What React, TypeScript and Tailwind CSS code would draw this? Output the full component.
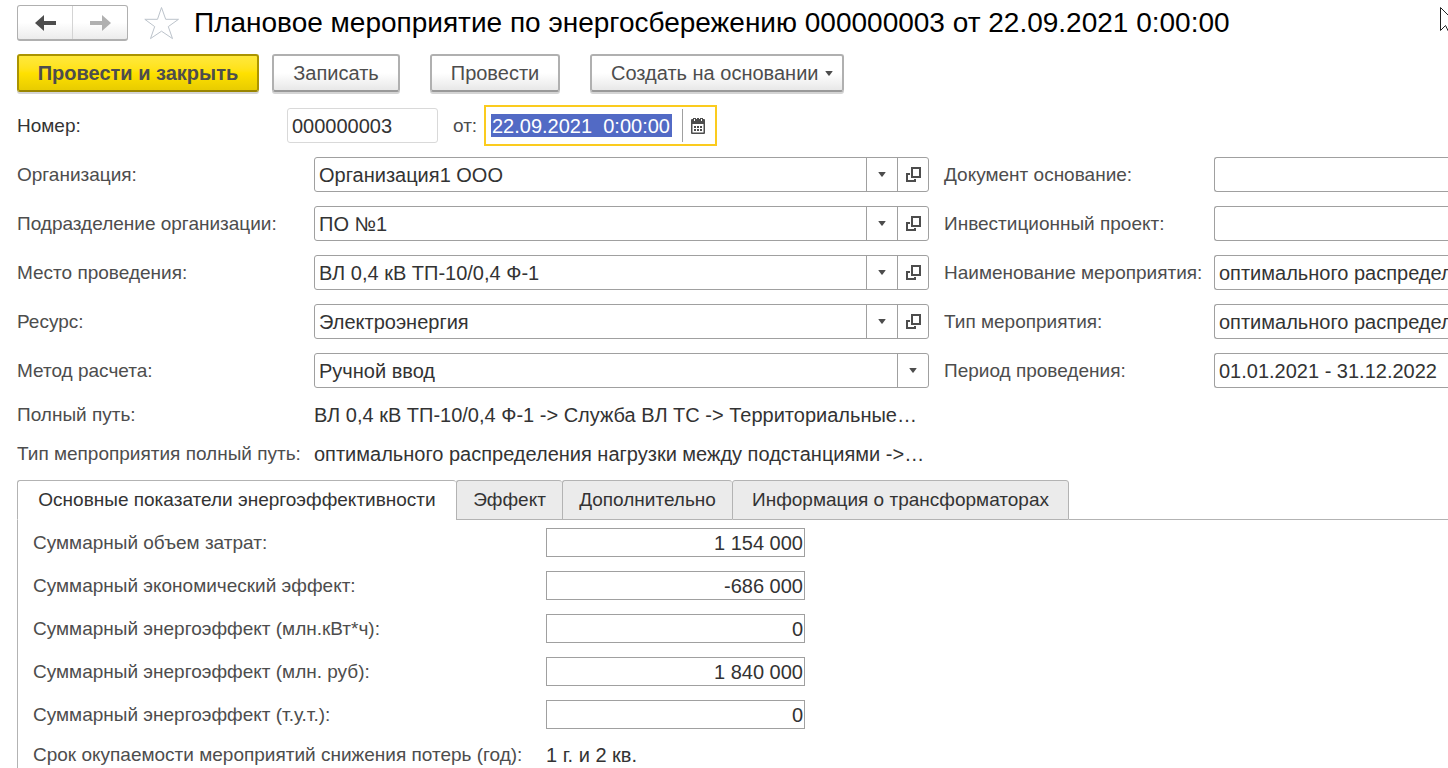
import { useState } from 'react';

const leftFields = [
  { id: 'org', label: 'Организация:', value: 'Организация1 ООО' },
  { id: 'dept', label: 'Подразделение организации:', value: 'ПО №1' },
  { id: 'place', label: 'Место проведения:', value: 'ВЛ 0,4 кВ ТП-10/0,4 Ф-1' },
  { id: 'resource', label: 'Ресурс:', value: 'Электроэнергия' },
];

const rightFields = [
  { id: 'base', label: 'Документ основание:', value: '' },
  { id: 'project', label: 'Инвестиционный проект:', value: '' },
  { id: 'name', label: 'Наименование мероприятия:', value: 'оптимального распределения нагрузки между подстанциями' },
  { id: 'type', label: 'Тип мероприятия:', value: 'оптимального распределения нагрузки между подстанциями' },
  { id: 'period', label: 'Период проведения:', value: '01.01.2021 - 31.12.2022' },
];

const totals = [
  { id: 'cost', label: 'Суммарный объем затрат:', value: '1 154 000' },
  { id: 'economic', label: 'Суммарный экономический эффект:', value: '-686 000' },
  { id: 'kwh', label: 'Суммарный энергоэффект (млн.кВт*ч):', value: '0' },
  { id: 'rub', label: 'Суммарный энергоэффект (млн. руб):', value: '1 840 000' },
  { id: 'tut', label: 'Суммарный энергоэффект (т.у.т.):', value: '0' },
];

const tabs = [
  { title: 'Основные показатели энергоэффективности', width: 'w-[439px]' },
  { title: 'Эффект', width: 'w-[106px]' },
  { title: 'Дополнительно', width: 'w-[170px]' },
  { title: 'Информация о трансформаторах', width: 'w-[337px]' },
];

const buttonClass =
  'h-[38px] rounded-[3px] border-2 border-[#b0b0b0] border-b-[#999] bg-linear-to-b from-white from-50% to-[#e8e8e8] text-[#4d4d4d] shadow-[0_2px_0_#d4d4d4] whitespace-nowrap';

function Caret() {
  return (
    <svg width="8" height="5" viewBox="0 0 8 5" fill="#4d4d4d" aria-hidden="true">
      <path d="M.8 0h6.400q.8 0 .3.600L4.500 4.500q-.5.5-1 0L.5.600Q0 0 .8 0z" />
    </svg>
  );
}

function OpenIcon() {
  return (
    <svg width="15" height="15" viewBox="0 0 15 15" fill="none" stroke="#4d4d4d" strokeWidth="2" aria-hidden="true">
      <path d="M6 1h8v9H6z" />
      <path d="M4 7H1v7h8v-2" />
    </svg>
  );
}

function CalendarIcon() {
  return (
    <svg width="14" height="16" viewBox="0 0 14 16" fill="#4d4d4d" aria-hidden="true">
      <path
        fillRule="evenodd"
        d="M1 1h1V0h3v1h1V0h2v1h1V0h3v1h1q1 0 1 1v13q0 1-1 1H1q-1 0-1-1V2q0-1 1-1zm.5 5v8.500h11V6zM3 1v2h1V1zm7 0v2h1V1z"
      />
      <path d="M3 8h2v2H3zM6 8h2v2H6zM9 8h2v2H9zM3 11h2v2H3zM6 11h2v2H6zM9 11h2v2H9z" />
    </svg>
  );
}

function ArrowIcon({ color, flip = false }: { color: string; flip?: boolean }) {
  return (
    <svg width="21" height="16" viewBox="0 0 21 16" fill={color} className={flip ? 'rotate-180' : ''} aria-hidden="true">
      <path d="M0 8l9-8v6h12v4H9v6z" />
    </svg>
  );
}

export default function App() {
  const [activeTab, setActiveTab] = useState(0);

  return (
    <div className="relative flex min-h-screen flex-col overflow-hidden bg-white pl-[17px] font-['Liberation_Sans',Arial,sans-serif] text-[19px] leading-6 text-[#4d4d4d]">
      <header className="flex items-center pt-[5px]">
        <div className="flex h-9 rounded-[3px] border border-[#b0b0b0] border-b-2 bg-linear-to-b from-white from-50% to-[#ececec]">
          <button aria-label="Назад" className="flex w-[55px] items-center justify-center border-r border-[#d4d4d4]">
            <ArrowIcon color="#4d4d4d" />
          </button>
          <button aria-label="Вперед" className="flex w-[54px] items-center justify-center">
            <ArrowIcon color="#b0b0b0" flip />
          </button>
        </div>
        <button aria-label="Избранное" className="ml-4">
          <svg width="36" height="34" viewBox="0 0 36 34" fill="none" stroke="#bcc3cb" aria-hidden="true">
            <path d="M17.500 1.500l4.200 11.800H34.500L24.300 20.600l4.200 12L17.500 25.200 6.500 32.600l4.200-12L.8 13.300h12.700z" />
          </svg>
        </button>
        <h1 className="ml-[14px] text-[28px] leading-9 whitespace-nowrap text-black">
          Плановое мероприятие по энергосбережению 000000003 от 22.09.2021 0:00:00
        </h1>
      </header>

      <div className="mt-[13px] flex text-[20px]">
        <button className="h-[38px] w-[242px] rounded-[3px] border-2 border-[#ab9400] border-b-[#998500] bg-linear-to-b from-[#ffe83b] via-[#ffe100] to-[#e8cc00] font-bold whitespace-nowrap shadow-[0_2px_0_#d4d4d4]">
          Провести и закрыть
        </button>
        <button className={`${buttonClass} ml-[13px] w-32`}>Записать</button>
        <button className={`${buttonClass} ml-[30px] w-[130px]`}>Провести</button>
        <button className={`${buttonClass} ml-[30px] flex w-[254px] items-center justify-between pr-[9px] pl-[19px]`}>
          Создать на основании
          <Caret />
        </button>
      </div>

      <div className="mt-[13px] flex items-center">
        <label htmlFor="number" className="w-[270px] text-[#333]">Номер:</label>
        <input
          id="number"
          defaultValue="000000003"
          className="h-[35px] w-[151px] rounded-[3px] border border-[#d9d9d9] px-1 pt-px text-[20px] text-[#333] outline-none"
        />
        <label htmlFor="date" className="ml-[15px] w-[31px]">от:</label>
        <div className="flex h-[41px] w-[233px] items-center border-2 border-[#fbcb1e] pl-[5px]">
          <input
            id="date"
            defaultValue="22.09.2021  0:00:00"
            className="h-[23px] w-[181px] bg-[#526ac5] px-px text-[20px] text-white outline-none"
          />
          <button aria-label="Выбрать дату" className="ml-[10px] flex h-[33px] flex-1 items-center border-l border-[#a0a0a0] pl-2">
            <CalendarIcon />
          </button>
        </div>
      </div>

      <div className="mt-[11px] grid grid-cols-[minmax(0,912px)_minmax(504px,1fr)] gap-x-[15px]">
        <div className="flex flex-col gap-[14px]">
          {leftFields.map((field) => (
            <div key={field.id} className="flex items-center">
              <label htmlFor={field.id} className="w-[297px] shrink-0">{field.label}</label>
              <div className="flex h-[35px] min-w-0 flex-1 rounded-[3px] border border-[#a0a0a0]">
                <input id={field.id} defaultValue={field.value} className="min-w-0 flex-1 px-1 text-[20px] text-[#333] outline-none" />
                <button aria-label="Выбрать из списка" className="flex w-[31px] items-center justify-center border-l border-[#a0a0a0]">
                  <Caret />
                </button>
                <button aria-label="Открыть" className="flex w-[31px] items-center justify-center border-l border-[#a0a0a0]">
                  <OpenIcon />
                </button>
              </div>
            </div>
          ))}
          <div className="flex items-center">
            <label htmlFor="method" className="w-[297px] shrink-0">Метод расчета:</label>
            <div className="relative flex h-[35px] min-w-0 flex-1 rounded-[3px] border border-[#a0a0a0]">
              <select id="method" className="flex-1 appearance-none px-1 text-[20px] text-[#333] outline-none">
                <option>Ручной ввод</option>
              </select>
              <span className="pointer-events-none absolute inset-y-0 right-0 flex w-[31px] items-center justify-center border-l border-[#a0a0a0]">
                <Caret />
              </span>
            </div>
          </div>
        </div>

        <div className="flex flex-col gap-[14px]">
          {rightFields.map((field) => (
            <div key={field.id} className="flex items-center">
              <label htmlFor={field.id} className="w-[270px] shrink-0 whitespace-nowrap">{field.label}</label>
              <input
                id={field.id}
                defaultValue={field.value}
                className="h-[35px] min-w-0 flex-1 rounded-l-[3px] border border-r-0 border-[#a0a0a0] pt-px pl-1 text-[20px] text-[#333] outline-none"
              />
            </div>
          ))}
        </div>
      </div>

      <dl className="mt-[15px] flex flex-col gap-[15px]">
        <div className="flex">
          <dt className="w-[297px] shrink-0 whitespace-nowrap">Полный путь:</dt>
          <dd className="text-[20px] text-[#333]">ВЛ 0,4 кВ ТП-10/0,4 Ф-1 -&gt; Служба ВЛ ТС -&gt; Территориальные…</dd>
        </div>
        <div className="flex">
          <dt className="w-[297px] shrink-0 whitespace-nowrap">Тип мепроприятия полный путь:</dt>
          <dd className="text-[20px] text-[#333]">оптимального распределения нагрузки между подстанциями -&gt;…</dd>
        </div>
      </dl>

      <div role="tablist" className="mt-[14px] flex h-10">
        {tabs.map((tab, index) => (
          <button
            key={tab.title}
            role="tab"
            aria-selected={index === activeTab}
            onClick={() => setActiveTab(index)}
            className={`${tab.width} rounded-t-[3px] border-y border-l border-[#b3b3b3] whitespace-nowrap text-[#333] last-of-type:border-r ${
              index === activeTab ? 'border-b-white bg-white' : 'bg-[#ebebeb]'
            }`}
          >
            {tab.title}
          </button>
        ))}
        <div className="flex-1 border-b border-[#b3b3b3]" />
      </div>

      <div role="tabpanel" className="flex flex-1 flex-col gap-[14px] border-l border-[#b3b3b3] pt-2 pl-[15px]">
        {totals.map((total) => (
          <div key={total.id} className="flex items-center">
            <label htmlFor={total.id} className="w-[513px]">{total.label}</label>
            <input
              id={total.id}
              defaultValue={total.value}
              className="h-[29px] w-[259px] border border-[#a0a0a0] px-px pt-px text-right text-[20px] text-[#333] outline-none"
            />
          </div>
        ))}
        <div className="flex">
          <span className="w-[513px] whitespace-nowrap">Срок окупаемости мероприятий снижения потерь (год):</span>
          <span className="text-[20px] text-[#333]">1 г. и 2 кв.</span>
        </div>
      </div>

      <svg className="pointer-events-none absolute top-[6px] right-0" width="8" height="26" viewBox="0 0 8 26" fill="#fff" stroke="#222" aria-hidden="true">
        <path d="M.5 1.500v23l5-5 3 6V9.500z" />
      </svg>
    </div>
  );
}
